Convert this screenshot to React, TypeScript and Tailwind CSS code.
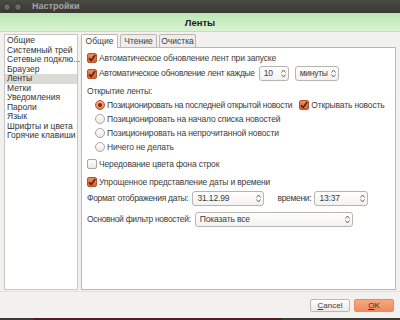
import React from "react";

const font = { fontFamily: '"Liberation Sans", "DejaVu Sans", sans-serif' };

const CheckBox = ({ checked }: { checked?: boolean }) =>
  checked ? (
    <span className="flex h-[10px] w-[10px] flex-none items-center justify-center rounded-[2px] border border-[#b8542a] bg-gradient-to-b from-[#f08a5c] to-[#dc5b2a]">
      <svg width="8" height="8" viewBox="0 0 8 8">
        <path d="M1 4.2 L3.2 6.5 L7.2 1" fill="none" stroke="#3a2218" strokeWidth="1.4" />
      </svg>
    </span>
  ) : (
    <span className="h-[10px] w-[10px] flex-none rounded-[2px] border border-[#a9a59f] bg-gradient-to-b from-white to-[#ebe9e6]" />
  );

const Radio = ({ checked }: { checked?: boolean }) => (
  <span
    className={
      checked
        ? "flex h-[10px] w-[10px] flex-none items-center justify-center rounded-full border border-[#b8542a] bg-gradient-to-b from-[#f6b08f] to-[#ec7e4c]"
        : "h-[10px] w-[10px] flex-none rounded-full border border-[#a9a59f] bg-gradient-to-b from-white to-[#ebe9e6]"
    }
  >
    {checked && <span className="h-[4px] w-[4px] rounded-full bg-[#7a2e12]" />}
  </span>
);

const Arrows = () => (
  <svg width="5" height="9" viewBox="0 0 5 9" className="flex-none">
    <path d="M0.5 3.5 L2.5 1 L4.5 3.5" fill="none" stroke="#555" strokeWidth="0.9" />
    <path d="M0.5 5.5 L2.5 8 L4.5 5.5" fill="none" stroke="#555" strokeWidth="0.9" />
  </svg>
);

const Field = ({ value, className }: { value: string; className: string }) => (
  <div
    className={
      "flex h-[15px] flex-none items-center justify-between gap-[2px] rounded-[3px] border border-[#b9b5ae] bg-gradient-to-b from-white to-[#f3f2f0] pl-[4px] pr-[2px] " +
      className
    }
  >
    <span>{value}</span>
    <Arrows />
  </div>
);

const navItems = [
  "Общие",
  "Системный трей",
  "Сетевые подклю...",
  "Браузер",
  "Ленты",
  "Метки",
  "Уведомления",
  "Пароли",
  "Язык",
  "Шрифты и цвета",
  "Горячие клавиши",
];

export default function App() {
  return (
    <div
      className="flex h-[320px] w-[400px] flex-col overflow-hidden whitespace-nowrap bg-[#f2f1f0] text-[8.5px] leading-[11px] text-[#3c3c3c]"
      style={font}
    >
      {/* title bar */}
      <div className="flex h-[13px] flex-none items-center gap-[3px] bg-gradient-to-b from-[#4a4944] to-[#3a3935] pl-[3px]">
        <span className="h-[8px] w-[8px] rounded-full border border-[#2e2d2a] bg-[#6a6963]" />
        <span className="h-[8px] w-[8px] rounded-full border border-[#2e2d2a] bg-[#6a6963]" />
        <span className="ml-[7px] text-[9px] font-bold text-[#a8a59f]">Настройки</span>
      </div>

      {/* header */}
      <div className="flex h-[19px] flex-none items-center justify-center border-b border-[#d5d3cf] bg-gradient-to-b from-[#b9e8b0] to-[#dbf2d6] text-[9.5px] font-bold text-[#1e1e1e]">
        Ленты
      </div>

      {/* body */}
      <div className="flex min-h-0 flex-1 gap-[3px] px-[4px] pt-[1px]">
        <div className="mb-[1px] mt-[1px] w-[74px] flex-none border border-[#c9c6c0] bg-white pt-[1px]">
          {navItems.map((n) => (
            <div
              key={n}
              className={
                "h-[9.5px] pl-[2px] leading-[9.5px] text-[#333] " +
                (n === "Ленты" ? "bg-[#dcdad5]" : "")
              }
            >
              {n}
            </div>
          ))}
        </div>

        <div className="flex min-w-0 flex-1 flex-col">
          <div className="flex h-[14px] flex-none items-end gap-[2px]">
            <div className="relative top-[1px] flex h-[14px] w-[37px] items-center justify-center rounded-t-[2px] border border-b-0 border-[#bcb8b1] bg-white">
              Общие
            </div>
            <div className="flex h-[13px] w-[37px] items-center justify-center rounded-t-[2px] border border-b-0 border-[#bcb8b1] bg-[#eeedeb]">
              Чтение
            </div>
            <div className="flex h-[13px] w-[37px] items-center justify-center rounded-t-[2px] border border-b-0 border-[#bcb8b1] bg-[#eeedeb]">
              Очистка
            </div>
          </div>

          <div className="mb-[1px] flex flex-1 flex-col border border-[#bcb8b1] bg-white pl-[5px] pt-[3px] tracking-[-0.15px]">
            <div className="flex h-[14px] items-center">
              <CheckBox checked />
              <span className="ml-[2px]">Автоматическое обновление лент при запуске</span>
            </div>
            <div className="flex h-[17px] items-center">
              <CheckBox checked />
              <span className="ml-[2px] tracking-[-0.3px]">Автоматическое обновление лент каждые</span>
              <Field value="10" className="ml-[4px] w-[30px]" />
              <Field value="минуты" className="ml-[6px] w-[44px] pl-[3px] tracking-[-0.3px]" />
            </div>

            <div className="mt-[4px] h-[12px]">Открытие ленты:</div>
            <div className="flex flex-col pl-[8px]">
              <div className="flex h-[14px] items-center">
                <Radio checked />
                <span className="ml-[2px] tracking-[-0.3px]">Позиционировать на последней открытой новости</span>
                <span className="ml-[7px] flex items-center">
                  <CheckBox checked />
                  <span className="ml-[2px]">Открывать новость</span>
                </span>
              </div>
              <div className="flex h-[14px] items-center">
                <Radio />
                <span className="ml-[2px]">Позиционировать на начало списка новостей</span>
              </div>
              <div className="flex h-[14px] items-center">
                <Radio />
                <span className="ml-[2px]">Позиционировать на непрочитанной новости</span>
              </div>
              <div className="flex h-[14px] items-center">
                <Radio />
                <span className="ml-[2px]">Ничего не делать</span>
              </div>
            </div>

            <div className="mt-[3px] flex h-[14px] items-center">
              <CheckBox />
              <span className="ml-[2px]">Чередование цвета фона строк</span>
            </div>

            <div className="mt-[4px] flex h-[14px] items-center">
              <CheckBox checked />
              <span className="ml-[2px]">Упрощенное представление даты и времени</span>
            </div>
            <div className="mt-[1px] flex h-[17px] items-center">
              <span className="tracking-[-0.3px]">Формат отображения даты:</span>
              <Field value="31.12.99" className="ml-[4px] w-[72px]" />
              <span className="ml-[13px] tracking-[-0.3px]">времени:</span>
              <Field value="13:37" className="ml-[3px] w-[54px]" />
            </div>
            <div className="mt-[4px] flex h-[17px] items-center">
              <span className="tracking-[-0.3px]">Основной фильтр новостей:</span>
              <Field value="Показать все" className="ml-[4px] w-[158px]" />
            </div>
          </div>
        </div>
      </div>

      {/* buttons */}
      <div className="flex h-[27px] flex-none items-center justify-end gap-[4px] border-t border-[#e2e0dc] pr-[6px]">
        <button className="flex h-[13px] w-[40px] items-center justify-center rounded-[2px] border border-[#bdb9b2] bg-gradient-to-b from-white to-[#eceae7] text-[8px] text-[#3c3c3c]">
          <span>
            <u>C</u>ancel
          </span>
        </button>
        <button className="flex h-[13px] w-[40px] items-center justify-center rounded-[2px] border border-[#e88a60] bg-gradient-to-b from-[#f6a882] to-[#ef8a5c] text-[8px] text-[#3c2a22]">
          <span>
            <u>O</u>K
          </span>
        </button>
      </div>

      {/* desktop strip */}
      <div className="flex h-[2px] flex-none">
        <div className="w-[34px] bg-[#3c3b37]" />
        <div className="w-[248px] bg-[#5a1a22]" />
        <div className="flex-1 bg-[#3c3b37]" />
      </div>
    </div>
  );
}
